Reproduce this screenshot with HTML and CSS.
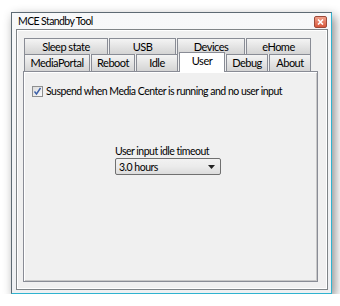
FILE: index.html
```html
<!DOCTYPE html>
<html lang="en">
<head>
  <meta charset="UTF-8"/>
  <title>MCE Standby Tool</title>
  <link rel="stylesheet" href="styles.css">
</head>
<body>
  <div class="window">
    <div class="titlebar">
      <span class="title">MCE Standby Tool</span>
      <span class="close">
        <svg width="7" height="6" viewBox="0 0 7 6"><path d="M1 0.5 L6 5.5 M6 0.5 L1 5.5" stroke="#fff" stroke-width="1.6"/></svg>
      </span>
    </div>
    <div class="client">
      <div class="tabs">
        <div class="tab-row">
          <div class="tab w-sleep">Sleep state</div>
          <div class="tab w-usb">USB</div>
          <div class="tab w-devices">Devices</div>
          <div class="tab w-ehome">eHome</div>
        </div>
        <div class="tab-row front">
          <div class="tab w-mp">MediaPortal</div>
          <div class="tab w-reboot">Reboot</div>
          <div class="tab w-idle">Idle</div>
          <div class="tab w-user selected">User</div>
          <div class="tab w-debug">Debug</div>
          <div class="tab w-about">About</div>
        </div>
        <div class="panel">
          <label class="check-line">
            <span class="checkbox">
              <svg width="9" height="9" viewBox="0 0 9 9"><path d="M1.5 4.5 L3.5 7 L7.5 1" fill="none" stroke="#3b5fa8" stroke-width="1.4"/></svg>
            </span>
            Suspend when Media Center is running and no user input
          </label>
          <div class="timeout">
            <div class="timeout-label">User input idle timeout</div>
            <div class="combo">
              <span>3.0 hours</span>
              <svg width="7" height="4" viewBox="0 0 7 4"><path d="M0 0 H7 L3.5 4 Z" fill="#222"/></svg>
            </div>
          </div>
        </div>
      </div>
    </div>
  </div>
</body>
</html>
```

FILE: styles.css
```css
html, body {
  margin: 0;
  padding: 0;
  background: #fff;
}

body {
  padding: 12px 0 0 11px;
  font-family: Lato, "Noto Sans", sans-serif;
  font-size: 10.5px;
  letter-spacing: -0.5px;
  color: #000;
}

/* window frame */
.window {
  width: 312px;
  height: 277px;
  border: 1px solid #5d6a73;
  border-bottom-color: #2fb3d0;
  border-right-color: #2fb3d0;
  background: linear-gradient(#f7f8f9, #eef0f2);
  box-shadow: 3px 4px 10px rgba(0, 0, 0, 0.45);
  display: flex;
  flex-direction: column;
  padding: 0 3px 3px 4px;
}

.titlebar {
  height: 16px;
  display: flex;
  align-items: center;
  justify-content: space-between;
  padding: 0 1px 0 2px;
}

.title {
  font-size: 10.5px;
  letter-spacing: -0.6px;
}

.close {
  width: 11px;
  height: 10px;
  border: 1px solid #9c4a3a;
  border-radius: 2px;
  background: linear-gradient(#f0a08a, #d9583c);
  display: flex;
  align-items: center;
  justify-content: center;
  margin-top: 2px;
}

.client {
  flex: 1;
  border: 1px solid #7f8487;
  box-shadow: inset 1px 1px 0 #fff, inset -1px -1px 0 #fff;
  background: #f0f0f0;
  padding: 8px 9px 7px 6px;
}

/* tab control */
.tabs {
  display: flex;
  flex-direction: column;
  height: 100%;
}

.tab-row {
  display: flex;
  height: 16px;
  margin-left: 1px;
}

.tab-row.front {
  height: 17px;
  align-items: flex-end;
}

.tab {
  box-sizing: border-box;
  height: 16px;
  border: 1px solid #898c95;
  border-bottom: none;
  margin-right: 1px;
  background: linear-gradient(#f4f4f4, #e4e4e4 50%, #d4d4d4);
  text-align: center;
  font-size: 11px;
  line-height: 15px;
  white-space: nowrap;
}

.front .tab {
  height: 17px;
}

.tab.selected {
  height: 20px;
  margin-bottom: -1px;
  background: #fff;
  position: relative;
  line-height: 16px;
}

.w-sleep { width: 84px; }
.w-usb { width: 67px; }
.w-devices { width: 68px; }
.w-ehome { width: 65px; }
.w-mp { width: 66px; }
.w-reboot { width: 44px; }
.w-idle { width: 42px; }
.w-user { width: 46px; }
.w-debug { width: 42px; }
.w-about { width: 42px; }

.panel {
  flex: 1;
  border: 1px solid #898c95;
  box-shadow: inset 1px 1px 0 #fff, inset -1px -1px 0 #c8c8c8;
  background: #f0f0f0;
  padding: 13px 8px;
}

.check-line {
  display: flex;
  align-items: center;
  gap: 3px;
  white-space: nowrap;
}

.checkbox {
  width: 9px;
  height: 9px;
  border: 1px solid #8e8f8f;
  background: linear-gradient(135deg, #dcdcdc, #fafafa);
  display: flex;
  align-items: center;
  justify-content: center;
}

.timeout {
  margin: 48px 0 0 83px;
  width: 106px;
}

.timeout-label {
  line-height: 12px;
  white-space: nowrap;
}

.combo {
  margin-top: 1px;
  height: 15px;
  border: 1px solid #707070;
  border-radius: 2px;
  background: linear-gradient(#f2f2f2, #ebebeb 50%, #dcdcdc);
  display: flex;
  align-items: center;
  justify-content: space-between;
  padding: 0 5px 0 3px;
}
```
